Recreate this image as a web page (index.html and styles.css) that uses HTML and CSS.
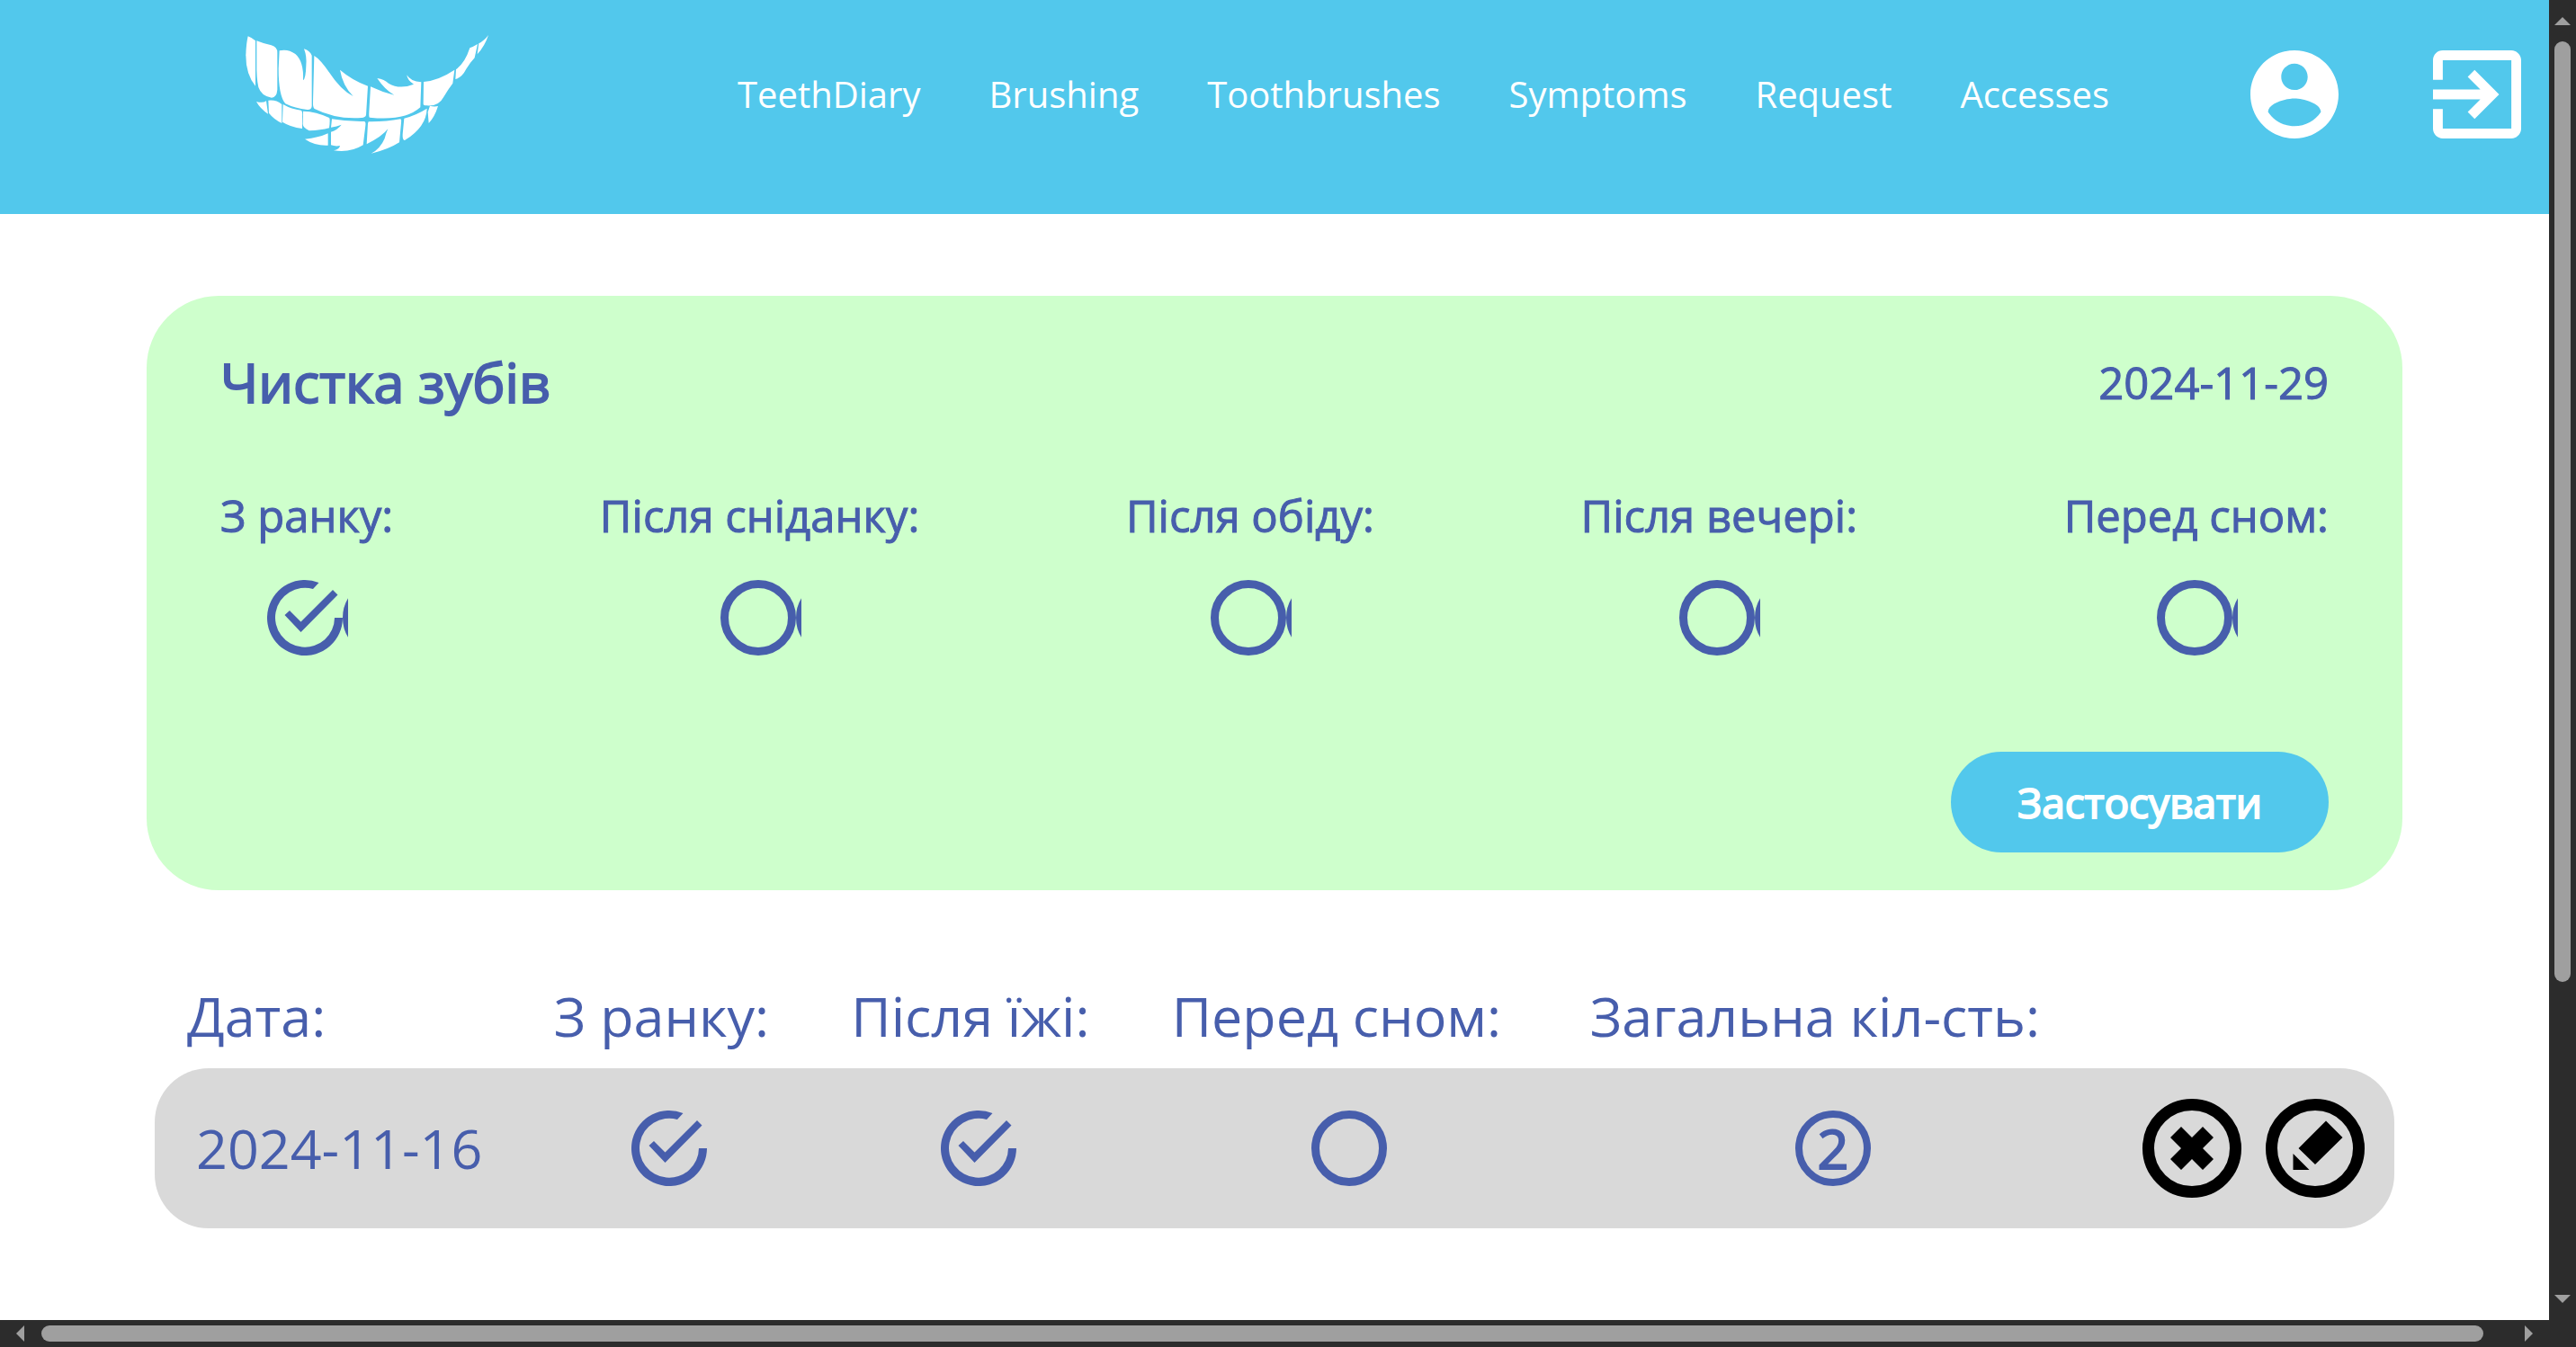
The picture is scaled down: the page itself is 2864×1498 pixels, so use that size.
FILE: index.html
```html
<!DOCTYPE html>
<html lang="uk">
<head>
<meta charset="utf-8">
<title>TeethDiary</title>
<link rel="stylesheet" href="styles.css">
</head>
<body>
<svg class="symbols" aria-hidden="true">
  <symbol id="done" viewBox="0 0 84 84">
    <path d="M57.500 3A42 42 0 1 0 84 42H75A33 33 0 1 1 51 10Z"/>
    <path d="M19.500 39L25 34L37.500 46.500L73 11L78.500 16.500L37.500 58Z"/>
  </symbol>
  <symbol id="empty" viewBox="0 0 84 84">
    <circle cx="42" cy="42" r="37.500" fill="none" stroke="currentColor" stroke-width="9"/>
  </symbol>
</svg>
<div class="window">
  <div class="page">
    <header class="header">
      <a class="logo" href="#" aria-label="TeethDiary">
        <svg viewBox="69 58 810 396" aria-hidden="true">
          <path d="M77 62Q91 67 102 77V228Q70 190 70 125Q71 88 77 62Z"/>
          <path d="M106 77Q130 87 155 92Q175 98 175 116V240Q173 266 156 267Q122 262 112 232Q105 200 106 150Z"/>
          <path d="M182 110Q210 103 235 121Q264 146 261 209Q270 203 271 160Q274 130 264 104Q284 111 290 126V295Q289 308 275 307Q234 303 202 287Q179 262 179 170Z"/>
          <path d="M298 127Q318 139 347 181Q387 242 428 262Q393 227 384 174Q425 209 477 228L471 325Q469 333 456 334Q370 340 299 304Q293 300 294 280Z"/>
          <path d="M486 230Q525 249 565 258Q534 241 508 202Q532 206 546 219Q583 241 630 222Q609 210 607 191Q619 213 655 215L652 299Q600 346 483 333Q480 331 481 315Z"/>
          <path d="M663 214Q714 209 766 174L760 219Q744 240 730 264Q713 297 672 293Q661 293 662 287Z"/>
          <path d="M771 173Q801 151 817 101Q828 97 843 88L833 134Q819 149 805 171Q791 199 769 205Z"/>
          <path d="M847 86Q865 77 879 58Q867 95 842 122Z"/>
          <path d="M105 280Q126 286 138 278L144 321Q118 304 105 280Z"/>
          <path d="M145 276Q171 273 190 289V352Q162 338 147 318Z"/>
          <path d="M194 289Q223 306 254 309Q260 312 258 330V370Q219 365 192 348Z"/>
          <path d="M261 312Q305 313 348 334Q352 337 348 368Q320 376 281 377Q260 367 260 355Z"/>
          <path d="M357 338Q409 347 465 346Q471 348 469 360L461 425Q420 451 363 443Q383 439 384 427Q369 430 354 425V381Q376 374 389 357Q374 363 354 366Z"/>
          <path d="M267 405Q312 401 344 386V426Q301 428 267 405Z"/>
          <path d="M479 347Q536 348 586 338Q590 341 588 351L582 416Q543 441 488 453Q518 438 533 403Q537 386 544 371Q525 396 473 422L477 353Z"/>
          <path d="M598 336Q639 325 674 303Q672 365 600 409Q592 410 593 389Z"/>
          <path d="M684 294Q698 298 711 295Q700 331 680 352L677 315Z"/>
        </svg>
      </a>
      <nav class="nav">
        <a href="#">TeethDiary</a>
        <a href="#">Brushing</a>
        <a href="#">Toothbrushes</a>
        <a href="#">Symptoms</a>
        <a href="#">Request</a>
        <a href="#">Accesses</a>
      </nav>
      <div class="account">
        <a href="#" aria-label="Профіль"><svg viewBox="2 2 20 20"><path d="M12 2C6.480 2 2 6.480 2 12s4.480 10 10 10 10-4.480 10-10S17.520 2 12 2zm0 3c1.660 0 3 1.340 3 3s-1.340 3-3 3-3-1.340-3-3 1.340-3 3-3zm0 14.200c-2.500 0-4.710-1.280-6-3.220.03-1.990 4-3.080 6-3.080 1.990 0 5.970 1.090 6 3.080-1.290 1.940-3.500 3.220-6 3.220z"/></svg></a>
        <a href="#" aria-label="Вийти"><svg viewBox="3 3 18 18"><path d="M10.090 15.590L11.500 17l5-5-5-5-1.410 1.410L12.670 11H3v2h9.670l-2.580 2.590zM19 3H5c-1.110 0-2 .9-2 2v4h2V5h14v14H5v-4H3v4c0 1.100.89 2 2 2h14c1.100 0 2-.9 2-2V5c0-1.100-.9-2-2-2z"/></svg></a>
      </div>
    </header>

    <main class="main">
      <form class="card">
        <div class="card-head">
          <h1>Чистка зубів</h1>
          <time datetime="2024-11-29">2024-11-29</time>
        </div>
        <div class="options">
          <label class="option">З ранку:
            <span class="tick"><input type="checkbox" checked><svg class="on"><use href="#done"/></svg><svg class="off"><use href="#empty"/></svg><svg class="next"><use href="#empty"/></svg></span>
          </label>
          <label class="option">Після сніданку:
            <span class="tick"><input type="checkbox"><svg class="on"><use href="#done"/></svg><svg class="off"><use href="#empty"/></svg><svg class="next"><use href="#empty"/></svg></span>
          </label>
          <label class="option">Після обіду:
            <span class="tick"><input type="checkbox"><svg class="on"><use href="#done"/></svg><svg class="off"><use href="#empty"/></svg><svg class="next"><use href="#empty"/></svg></span>
          </label>
          <label class="option">Після вечері:
            <span class="tick"><input type="checkbox"><svg class="on"><use href="#done"/></svg><svg class="off"><use href="#empty"/></svg><svg class="next"><use href="#empty"/></svg></span>
          </label>
          <label class="option">Перед сном:
            <span class="tick"><input type="checkbox"><svg class="on"><use href="#done"/></svg><svg class="off"><use href="#empty"/></svg><svg class="next"><use href="#empty"/></svg></span>
          </label>
        </div>
        <button class="apply" type="button">Застосувати</button>
      </form>

      <table class="history">
        <colgroup><col class="c-date"><col class="c-morning"><col class="c-meal"><col class="c-night"><col class="c-total"><col class="c-actions"></colgroup>
        <thead>
          <tr><th>Дата:</th><th>З ранку:</th><th>Після їжі:</th><th>Перед сном:</th><th>Загальна кіл-сть:</th><td></td></tr>
        </thead>
        <tbody>
          <tr>
            <td>2024-11-16</td>
            <td><svg class="mark" role="img" aria-label="Так"><use href="#done"/></svg></td>
            <td><svg class="mark" role="img" aria-label="Так"><use href="#done"/></svg></td>
            <td><svg class="mark" role="img" aria-label="Ні"><use href="#empty"/></svg></td>
            <td><span class="count">2</span></td>
            <td>
              <div class="actions">
                <button type="button" aria-label="Видалити"><svg viewBox="0 0 110 110"><circle cx="55" cy="55" r="48.500" fill="none" stroke="#000" stroke-width="13"/><path d="M31 43L43 31L55 43L67 31L79 43L67 55L79 67L67 79L55 67L43 79L31 67L43 55Z"/></svg></button>
                <button type="button" aria-label="Редагувати"><svg viewBox="0 0 110 110"><circle cx="55" cy="55" r="48.500" fill="none" stroke="#000" stroke-width="13"/><path d="M67 24.500L85.500 43L55 73L36.500 55ZM30.500 61V79H48.500Z"/></svg></button>
              </div>
            </td>
          </tr>
        </tbody>
      </table>
    </main>
  </div>

  <div class="bar bar-y" aria-hidden="true">
    <svg viewBox="0 0 18 9"><path d="M0 9L9 0L18 9Z"/></svg>
    <div class="track"><div class="thumb"></div></div>
    <svg viewBox="0 0 18 9"><path d="M0 0H18L9 9Z"/></svg>
  </div>
  <div class="bar bar-x" aria-hidden="true">
    <svg viewBox="0 0 9 18"><path d="M9 0V18L0 9Z"/></svg>
    <div class="track"><div class="thumb"></div></div>
    <svg viewBox="0 0 9 18"><path d="M0 0L9 9L0 18Z"/></svg>
  </div>
  <div class="corner"></div>
</div>
</body>
</html>
```
FILE: styles.css
```css
* {
  box-sizing: border-box;
}

body {
  margin: 0;
  font-family: "Open Sans", sans-serif;
  color: #475eac;
  background: #fff;
}

a {
  color: inherit;
  text-decoration: none;
}

svg {
  display: block;
  fill: currentColor;
}

.symbols {
  position: absolute;
  width: 0;
  height: 0;
}

.window {
  display: grid;
  grid-template-columns: minmax(0, 1fr) 30px;
  grid-template-rows: minmax(0, 1fr) 30px;
  height: 100vh;
}

.page {
  overflow: hidden;
}

/* Header */
.header {
  display: flex;
  align-items: center;
  padding: 39px 31px 67px 273px;
  color: #fff;
  background: #52c8ec;
}

.logo svg {
  width: 270px;
  height: 132px;
}

.nav {
  display: flex;
  gap: 76px;
  margin-left: 277px;
  font-size: 40px;
  line-height: 54px;
}

.account {
  display: flex;
  gap: 105px;
  margin-left: auto;
}

.account svg {
  width: 98px;
  height: 98px;
}

/* Form card */
.main {
  padding: 91px 163px 0;
}

.card {
  display: flex;
  flex-direction: column;
  padding: 54px 82px 42px;
  border-radius: 80px;
  background: #ceffcc;
  font-size: 49px;
  line-height: 64px;
  -webkit-text-stroke: 1px currentColor;
}

.card-head {
  display: flex;
  align-items: center;
  justify-content: space-between;
}

h1 {
  margin: 0;
  font-size: 61px;
  line-height: 84px;
}

h1,
.count {
  font-weight: 400;
  -webkit-text-stroke: 2px currentColor;
}

.options {
  display: flex;
  justify-content: space-between;
  margin-top: 74px;
}

.option {
  display: flex;
  flex-direction: column;
  align-items: center;
  gap: 40px;
}

.tick {
  position: relative;
  display: flex;
  width: 90px;
  height: 84px;
  margin-left: 2px;
  overflow: hidden;
}

.tick input {
  position: absolute;
  inset: 0;
  width: 100%;
  height: 100%;
  margin: 0;
  opacity: 0;
}

.tick svg,
.mark {
  flex: none;
  width: 84px;
  height: 84px;
}

.tick .on,
.tick input:checked ~ .off {
  display: none;
}

.tick input:checked ~ .on {
  display: block;
}

.apply {
  align-self: flex-end;
  height: 112px;
  margin-top: 107px;
  padding: 0 74px;
  border: 0;
  border-radius: 56px;
  color: #fff;
  background: #52c8ec;
  font: inherit;
  font-size: 46px;
  -webkit-text-stroke: 2px currentColor;
}

/* History table */
.history {
  width: calc(100% - 18px);
  margin: 98px 9px 0;
  border-collapse: collapse;
  table-layout: fixed;
  font-size: 61px;
  line-height: 84px;
}

.c-date { width: 15.62%; }
.c-morning { width: 14.74%; }
.c-meal { width: 12.85%; }
.c-night { width: 20.24%; }
.c-total { width: 22.97%; }

.history th,
.history td {
  padding: 0;
  text-align: center;
  white-space: nowrap;
}

.history th {
  padding: 0 18px 16px 0;
  font-weight: 400;
}

.history th:nth-child(4) {
  padding-right: 28px;
}

.history th:nth-child(5) {
  padding-right: 40px;
}

.history th:first-child {
  padding-left: 36px;
  text-align: left;
}

.history tbody td {
  height: 178px;
  background: #d9d9d9;
}

.history tbody td:first-child {
  padding-left: 46px;
  border-radius: 60px 0 0 60px;
  text-align: left;
}

.history tbody td:last-child {
  border-radius: 0 60px 60px 0;
}

.mark,
.count {
  margin: 0 auto;
}

.count {
  display: flex;
  align-items: center;
  justify-content: center;
  width: 84px;
  height: 84px;
  border: 8px solid;
  border-radius: 50%;
}

.actions {
  display: flex;
  justify-content: flex-end;
  gap: 27px;
  padding-right: 33px;
}

.actions button {
  padding: 0;
  border: 0;
  color: #000;
  background: none;
}

.actions svg {
  width: 110px;
  height: 110px;
}

/* Scroll bars */
.bar {
  display: flex;
  align-items: center;
  color: #9f9f9f;
  background: #2c2c2c;
}

.bar-y {
  flex-direction: column;
  grid-column: 2;
  grid-row: 1;
  padding: 19px 0;
}

.bar-x {
  grid-column: 1;
  grid-row: 2;
  padding: 0 18px;
}

.bar svg {
  flex: none;
}

.bar-y svg {
  width: 18px;
  height: 9px;
}

.bar-x svg {
  width: 9px;
  height: 18px;
}

.track {
  flex: 1;
}

.bar-y .track {
  padding: 18px 0;
}

.bar-x .track {
  padding: 0 19px;
}

.thumb {
  border-radius: 9px;
  background: #9f9f9f;
}

.bar-y .thumb {
  width: 18px;
  height: 76%;
}

.bar-x .thumb {
  width: 99%;
  height: 18px;
}

.corner {
  background: #2c2c2c;
}
```
